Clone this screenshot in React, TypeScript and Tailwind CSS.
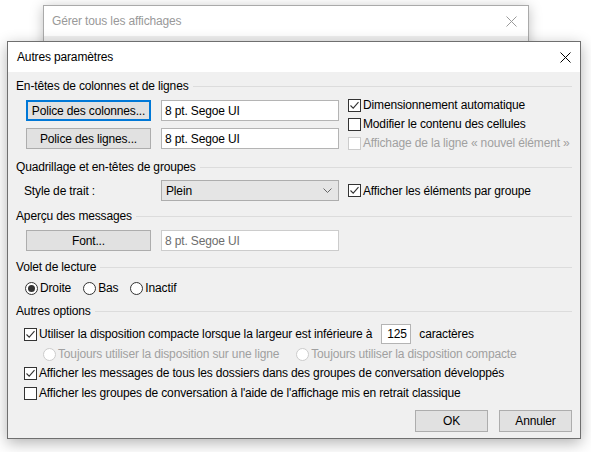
import React from "react";

function Check({ checked = false, disabled = false }: { checked?: boolean; disabled?: boolean }) {
  return (
    <span
      className={
        "flex h-[13px] w-[13px] flex-none items-center justify-center border bg-white " +
        (disabled ? "border-[#cccccc]" : "border-[#333333]")
      }
    >
      {checked && (
        <svg width="11" height="11" viewBox="0 0 11 11">
          <path d="M1.5 5.5 L4.2 8.2 L9.5 2.2" fill="none" stroke="#333333" strokeWidth="1.1" />
        </svg>
      )}
    </span>
  );
}

function Radio({ checked = false, disabled = false }: { checked?: boolean; disabled?: boolean }) {
  return (
    <span
      className={
        "flex h-[13px] w-[13px] flex-none items-center justify-center rounded-full border bg-white " +
        (disabled ? "border-[#cccccc]" : "border-[#333333]")
      }
    >
      {checked && <span className="h-[7px] w-[7px] rounded-full bg-[#333333]" />}
    </span>
  );
}

function SectionHeader({ title, className = "" }: { title: string; className?: string }) {
  return (
    <div className={"flex h-4 items-center " + className}>
      <span className="whitespace-nowrap">{title}</span>
      <div className="ml-[4px] mt-[1px] flex-1 border-t border-[#dcdcdc]" />
    </div>
  );
}

function CheckRow({
  label,
  checked,
  disabled,
  className = "",
}: {
  label: string;
  checked?: boolean;
  disabled?: boolean;
  className?: string;
}) {
  return (
    <div className={"flex h-4 items-center gap-[2px] " + className}>
      <Check checked={checked} disabled={disabled} />
      <span className={"whitespace-nowrap " + (disabled ? "text-[#a0a0a0]" : "")}>{label}</span>
    </div>
  );
}

function Btn({ label, focused, className = "" }: { label: string; focused?: boolean; className?: string }) {
  return (
    <div
      className={
        "flex h-[21px] w-[125px] items-center justify-center bg-[#e1e1e1] " +
        (focused ? "border-2 border-[#0078d7]" : "border border-[#adadad]") +
        " " +
        className
      }
    >
      {label}
    </div>
  );
}

function TextBox({ value, muted, className = "" }: { value: string; muted?: boolean; className?: string }) {
  return (
    <div
      className={
        "flex h-[21px] w-[178px] items-center border bg-white px-[3px] " +
        (muted ? "border-[#cccccc] text-[#6d6d6d]" : "border-[#b4b4b4]") +
        " " +
        className
      }
    >
      {value}
    </div>
  );
}

export default function App() {
  return (
    <div className="relative h-[452px] w-[591px] overflow-hidden bg-white font-['Segoe_UI','Liberation_Sans',sans-serif] text-[12px] leading-4 tracking-[-0.15px] text-black">
      {/* fenêtre en arrière-plan */}
      <div className="absolute left-[43px] top-[5px] h-[120px] w-[486px] border border-[#aaaaaa] bg-[#f0f0f0] shadow-[0_2px_12px_rgba(0,0,0,0.25)]">
        <div className="flex h-[30px] items-center justify-between bg-white pl-[8px] pr-[11px] text-[#999999]">
          <span>Gérer tous les affichages</span>
          <svg width="11" height="11" viewBox="0 0 11 11">
            <path d="M0.5 0.5 L10.5 10.5 M10.5 0.5 L0.5 10.5" stroke="#9a9a9a" strokeWidth="1" />
          </svg>
        </div>
      </div>

      {/* boîte de dialogue */}
      <div className="absolute left-[7px] top-[41px] flex h-[398px] w-[574px] flex-col border border-[#6f6f6f] bg-[#f0f0f0] shadow-[0_4px_14px_rgba(0,0,0,0.3)]">
        <div className="flex h-[30px] flex-none items-center justify-between bg-white pl-[9px] pr-[9px]">
          <span>Autres paramètres</span>
          <svg width="11" height="11" viewBox="0 0 11 11">
            <path d="M0.5 0.5 L10.5 10.5 M10.5 0.5 L0.5 10.5" stroke="#000000" strokeWidth="1" />
          </svg>
        </div>

        <div className="flex flex-col px-[8px]">
          <SectionHeader title="En-têtes de colonnes et de lignes" className="mt-[6px]" />
          <div className="flex items-start">
            <div className="ml-[10px] mt-[6px] flex flex-col gap-[7px]">
              <div className="flex gap-[10px]">
                <Btn label="Police des colonnes..." focused />
                <TextBox value="8 pt. Segoe UI" />
              </div>
              <div className="flex gap-[10px]">
                <Btn label="Police des lignes..." />
                <TextBox value="8 pt. Segoe UI" />
              </div>
            </div>
            <div className="ml-[9px] mt-[3px] flex flex-col gap-[3px]">
              <CheckRow label="Dimensionnement automatique" checked />
              <CheckRow label="Modifier le contenu des cellules" />
              <CheckRow label="Affichage de la ligne « nouvel élément »" disabled />
            </div>
          </div>

          <SectionHeader title="Quadrillage et en-têtes de groupes" className="mt-[8px]" />
          <div className="mt-[5px] flex items-center">
            <span className="ml-[8px] w-[137px]">Style de trait :</span>
            <div className="flex h-[21px] w-[178px] items-center justify-between border border-[#adadad] bg-[#e5e5e5] pl-[4px] pr-[6px]">
              <span>Plein</span>
              <svg width="9" height="5" viewBox="0 0 9 5">
                <path d="M0.5 0.5 L4.5 4.5 L8.5 0.5" fill="none" stroke="#666666" strokeWidth="1" />
              </svg>
            </div>
            <CheckRow label="Afficher les éléments par groupe" checked className="ml-[9px]" />
          </div>

          <SectionHeader title="Aperçu des messages" className="mt-[7px]" />
          <div className="ml-[10px] mt-[6px] flex gap-[10px]">
            <Btn label="Font..." />
            <TextBox value="8 pt. Segoe UI" muted />
          </div>

          <SectionHeader title="Volet de lecture" className="mt-[8px]" />
          <div className="ml-[9px] mt-[5px] flex h-4 items-center">
            <Radio checked />
            <span className="ml-[2px]">Droite</span>
            <span className="ml-[12px]">
              <Radio />
            </span>
            <span className="ml-[2px]">Bas</span>
            <span className="ml-[12px]">
              <Radio />
            </span>
            <span className="ml-[2px]">Inactif</span>
          </div>

          <SectionHeader title="Autres options" className="mt-[7px]" />
          <div className="ml-[8px] mt-[5px] flex h-[20px] items-center">
            <Check checked />
            <span className="ml-[2px] whitespace-nowrap">
              Utiliser la disposition compacte lorsque la largeur est inférieure à
            </span>
            <div className="ml-[9px] flex h-[20px] w-[30px] items-center border border-[#b4b4b4] bg-white pl-[5px]">
              125
            </div>
            <span className="ml-[8px]">caractères</span>
          </div>
          <div className="ml-[27px] mt-[2px] flex h-4 items-center whitespace-nowrap text-[#a0a0a0]">
            <Radio disabled />
            <span className="ml-[2px]">Toujours utiliser la disposition sur une ligne</span>
            <span className="ml-[17px]">
              <Radio disabled />
            </span>
            <span className="ml-[2px]">Toujours utiliser la disposition compacte</span>
          </div>
          <CheckRow
            label="Afficher les messages de tous les dossiers dans des groupes de conversation développés"
            checked
            className="ml-[8px] mt-[3px]"
          />
          <CheckRow
            label="Afficher les groupes de conversation à l'aide de l'affichage mis en retrait classique"
            className="ml-[8px] mt-[4px]"
          />

          <div className="mt-[9px] flex justify-end gap-[11px]">
            <div className="flex h-[22px] w-[73px] items-center justify-center border border-[#adadad] bg-[#e1e1e1]">
              OK
            </div>
            <div className="flex h-[22px] w-[73px] items-center justify-center border border-[#adadad] bg-[#e1e1e1]">
              Annuler
            </div>
          </div>
        </div>
      </div>
    </div>
  );
}
